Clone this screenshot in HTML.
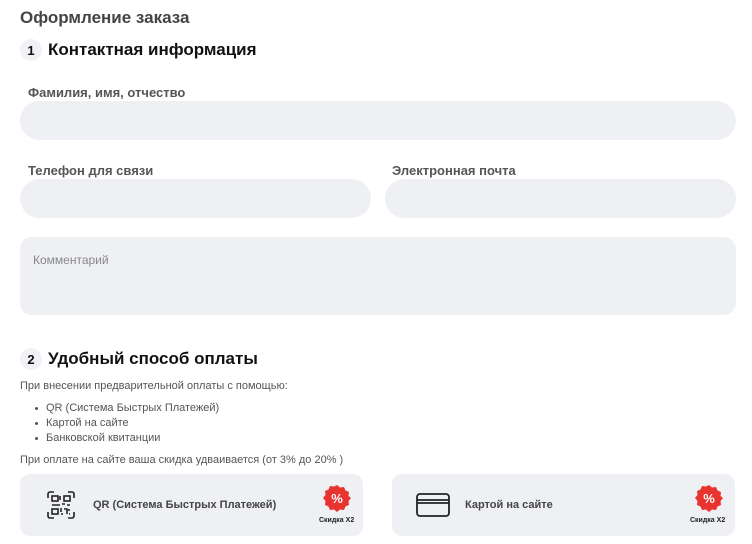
<!DOCTYPE html>
<html><head><meta charset="utf-8"><style>
*{box-sizing:border-box;margin:0;padding:0}
body{width:752px;height:544px;background:#fff;font-family:"Liberation Sans","DejaVu Sans",sans-serif;position:relative;overflow:hidden;color:#333}
.a{position:absolute}
.title{left:20px;top:8px;font-size:17px;font-weight:bold;color:#444}
.step{font-size:17px;font-weight:bold;color:#111;display:flex;align-items:center}
.num{width:22px;height:22px;border-radius:50%;background:#f0f2f6;font-size:13px;display:flex;align-items:center;justify-content:center;margin-right:6px}
.lbl{font-size:13px;font-weight:bold;color:#555}
.in{background:#eef0f4;border-radius:20px}
.t{font-size:11px;color:#555}
ul{list-style:none}
li{font-size:11px;color:#555;line-height:15px;position:relative;padding-left:26px}
li:before{content:"";position:absolute;left:15px;top:6px;width:3px;height:3px;border-radius:50%;background:#555}
.card{background:#eef0f4;border-radius:10px;height:62px;top:474px}
.ct{font-size:11px;font-weight:bold;color:#444;top:25px}
.sk{font-size:7px;font-weight:bold;color:#222;top:43px}
</style></head><body>
<div class="a title">Оформление заказа</div>
<div class="a step" style="left:20px;top:39px"><div class="num">1</div>Контактная информация</div>
<div class="a lbl" style="left:28px;top:85px">Фамилия, имя, отчество</div>
<div class="a in" style="left:20px;top:101px;width:716px;height:39px"></div>
<div class="a lbl" style="left:28px;top:163px">Телефон для связи</div>
<div class="a lbl" style="left:392px;top:163px">Электронная почта</div>
<div class="a in" style="left:20px;top:179px;width:351px;height:39px"></div>
<div class="a in" style="left:385px;top:179px;width:351px;height:39px"></div>
<div class="a in" style="left:20px;top:237px;width:716px;height:78px;border-radius:12px"></div>
<div class="a" style="left:33px;top:253px;font-size:12px;color:#888">Комментарий</div>
<div class="a step" style="left:20px;top:348px"><div class="num">2</div>Удобный способ оплаты</div>
<div class="a t" style="left:20px;top:380px">При внесении предварительной оплаты с помощью:</div>
<ul class="a" style="left:20px;top:401px">
<li>QR (Система Быстрых Платежей)</li><li>Картой на сайте</li><li>Банковской квитанции</li></ul>
<div class="a t" style="left:20px;top:454px">При оплате на сайте ваша скидка удваивается (от 3% до 20% )</div>

<div class="a card" style="left:20px;width:343px">
<svg class="a" style="left:27px;top:17px" width="28" height="28" viewBox="0 0 28 28" fill="none" stroke="#222" stroke-width="1.6">
<path d="M1 7V3a2 2 0 0 1 2-2h4M21 1h4a2 2 0 0 1 2 2v4M27 21v4a2 2 0 0 1-2 2h-4M7 27H3a2 2 0 0 1-2-2v-4"/>
<rect x="5" y="5" width="6" height="5"/><rect x="17" y="5" width="6" height="5"/><rect x="5" y="18" width="6" height="5"/>
<path d="M13 5v4M5 14h8M15 13h3M20 14h3M14 17v4M17 18h3v5M22 18v2M14 23h2M22 23h1"/></svg>
<div class="a ct" style="left:73px">QR (Система Быстрых Платежей)</div>
<svg class="a" style="left:303px;top:10px" width="28" height="28" viewBox="0 0 28 28">
<path fill="#e8332f" d="M14 1l3 2.5 4-.5 1.5 3.5 3.5 1.5-.5 4L28 14l-2.5 3 .5 4-3.5 1.5L21 26l-4-.5L14 28l-3-2.5-4 .5-1.5-3.5L2 21l.5-4L0 14l2.5-3-.5-4 3.5-1.5L7 2l4 .5z"/>
<text x="14" y="19" font-size="13" font-weight="bold" fill="#fff" text-anchor="middle" font-family="Liberation Sans">%</text></svg>
<div class="a sk" style="left:299px">Скидка X2</div>
</div>

<div class="a card" style="left:392px;width:343px">
<svg class="a" style="left:24px;top:19px" width="34" height="24" viewBox="0 0 34 24" fill="none" stroke="#222" stroke-width="1.8">
<rect x="1" y="1" width="32" height="22" rx="3"/><path d="M1 7h32M1 10h32"/></svg>
<div class="a ct" style="left:73px">Картой на сайте</div>
<svg class="a" style="left:303px;top:10px" width="28" height="28" viewBox="0 0 28 28">
<path fill="#e8332f" d="M14 1l3 2.5 4-.5 1.5 3.5 3.5 1.5-.5 4L28 14l-2.5 3 .5 4-3.5 1.5L21 26l-4-.5L14 28l-3-2.5-4 .5-1.5-3.5L2 21l.5-4L0 14l2.5-3-.5-4 3.5-1.5L7 2l4 .5z"/>
<text x="14" y="19" font-size="13" font-weight="bold" fill="#fff" text-anchor="middle" font-family="Liberation Sans">%</text></svg>
<div class="a sk" style="left:298px">Скидка X2</div>
</div>
</body></html>
